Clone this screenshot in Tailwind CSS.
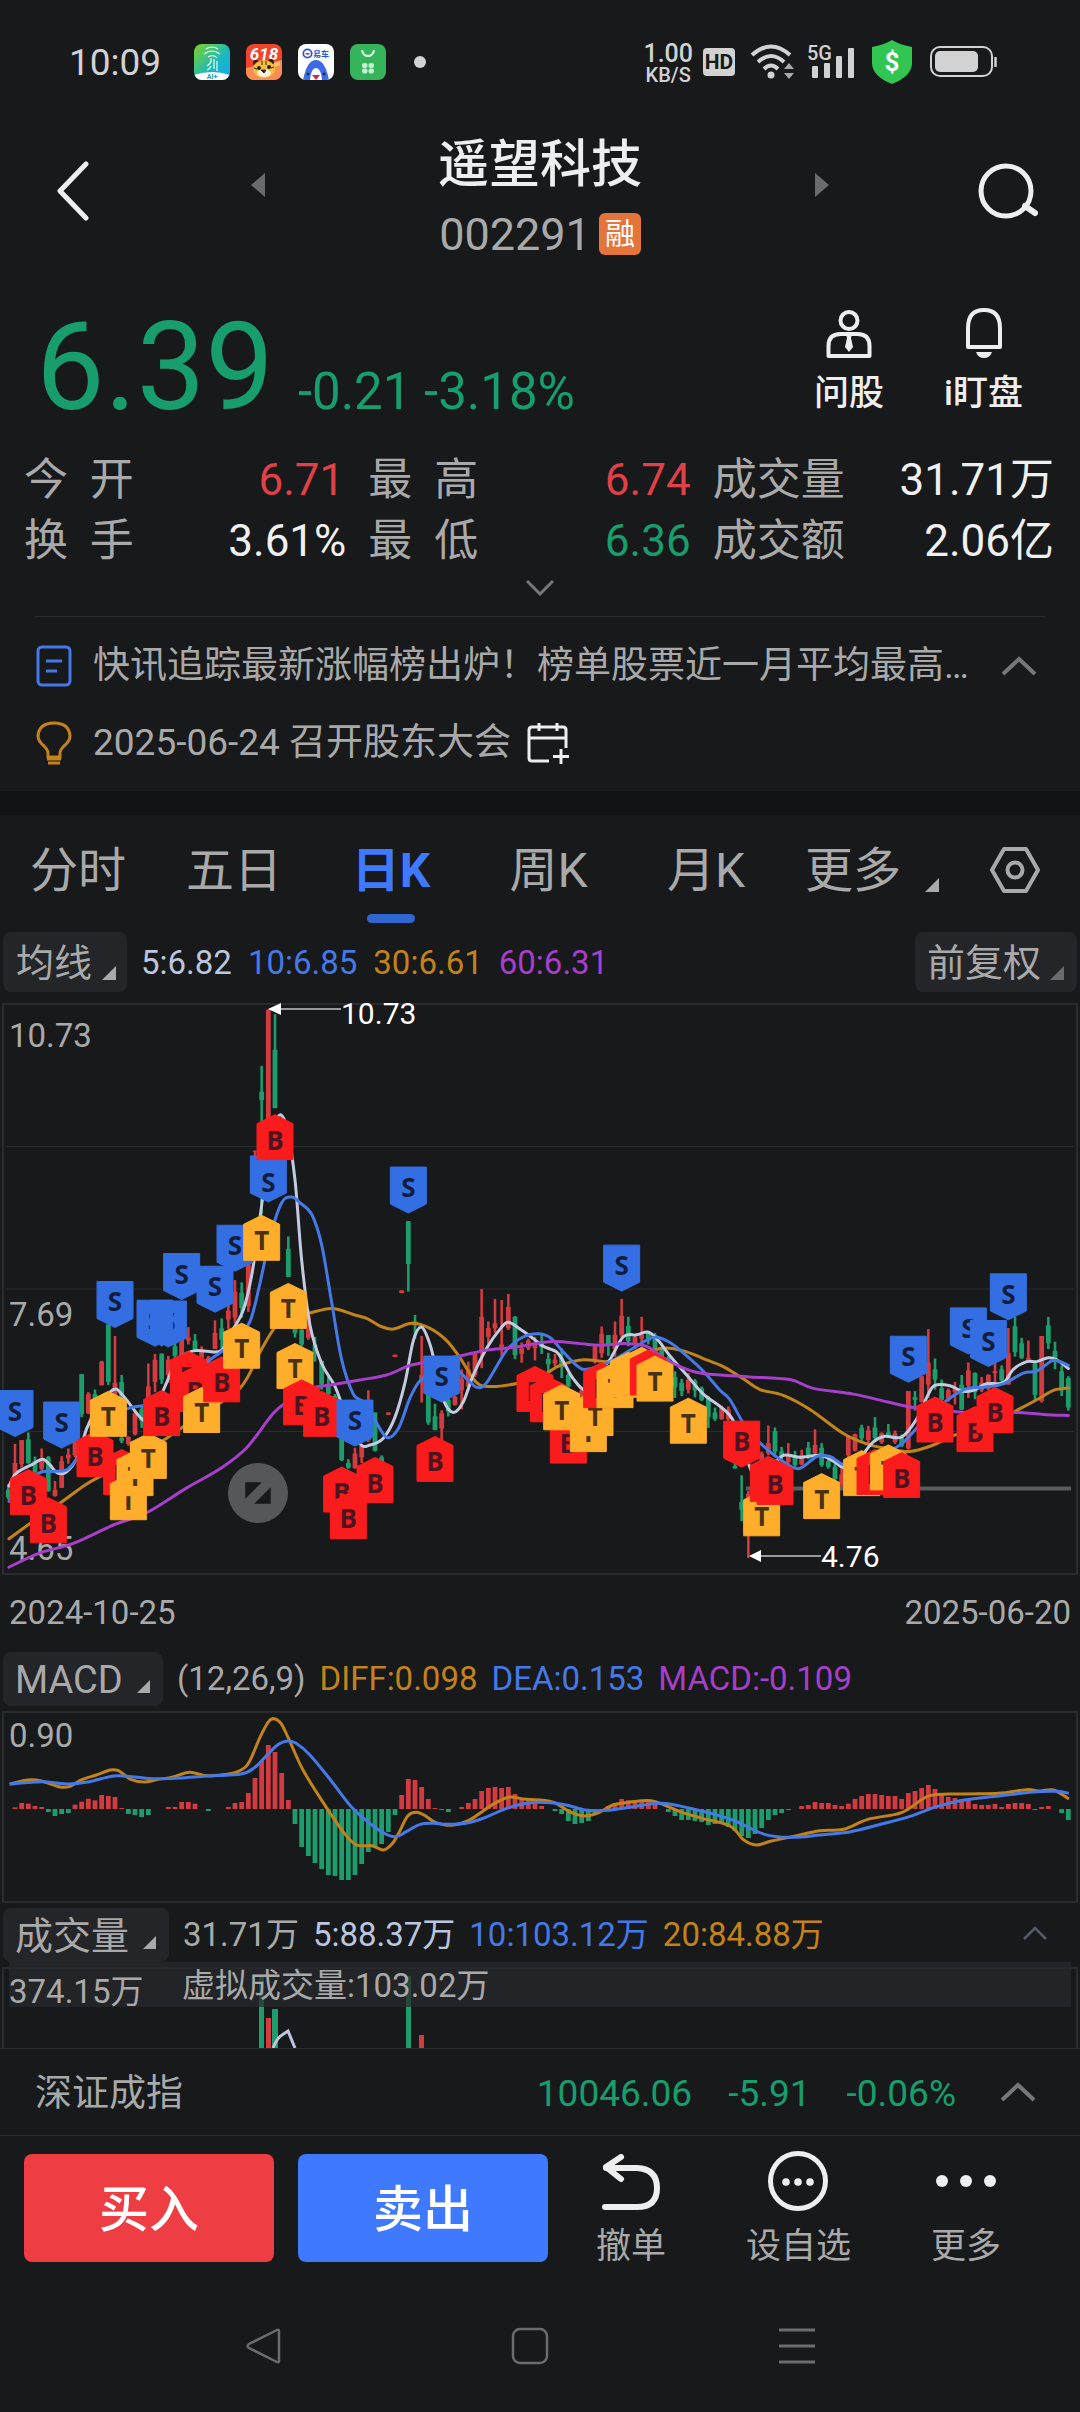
<!DOCTYPE html>
<html lang="zh-CN">
<head>
<meta charset="utf-8">
<meta name="viewport" content="width=device-width, initial-scale=1">
<title>遥望科技 002291</title>
<script src="https://cdn.jsdelivr.net/npm/@tailwindcss/browser@4"></script>
</head>
<body class="bg-[#17191b] text-[#a9a9a9] font-[Roboto,'Noto_Sans_CJK_SC',sans-serif]">
<div class="flex min-h-screen w-full flex-col overflow-hidden">

  <!-- status bar -->
  <div class="flex h-[124px] items-center pl-[69px] pr-[82px] text-[#d2d2d2]">
    <span class="w-[125px] text-[37px] leading-none">10:09</span>
    <div class="flex items-center gap-4">
      <svg class="size-9" viewBox="0 0 36 36"><defs><linearGradient id="ga" x1="0" y1="0" x2="1" y2="1"><stop offset="0" stop-color="#7dd321"/><stop offset=".6" stop-color="#18b7c4"/><stop offset="1" stop-color="#18a8ee"/></linearGradient><clipPath id="r"><rect width="36" height="36" rx="8"/></clipPath></defs><g clip-path="url(#r)"><rect width="36" height="36" fill="url(#ga)"/><path d="M12 5q6-4 12 0M10 10q8-6 16 0M14 13q6-3 9 1M13 22q5-3 4-8M20 15v10M23 17v10M13 26q3-1 4-4" fill="none" stroke="#e8fff4" stroke-width="1.2"/><path d="M0 31q18-6 36 0v6H0z" fill="#fff"/><text x="18" y="35" text-anchor="middle" font-size="7" font-weight="700" fill="#18a0b8">AI+</text></g></svg>
      <svg class="size-9" viewBox="0 0 36 36"><g clip-path="url(#r)"><rect width="36" height="36" fill="#f0442c"/><path d="M0 24l36-8v20H0z" fill="#f98d55"/><text x="18" y="16" text-anchor="middle" font-size="17" font-style="italic" font-weight="700" fill="#fff">618</text><circle cx="10" cy="19" r="3" fill="#2d2115"/><circle cx="25" cy="18" r="3" fill="#2d2115"/><ellipse cx="18" cy="25" rx="11" ry="9" fill="#f9bd3d"/><ellipse cx="18" cy="29" rx="7" ry="4" fill="#fff3da"/><circle cx="13" cy="24" r="2" fill="#222"/><circle cx="23" cy="23" r="2" fill="#222"/><path d="M15 26h5l-2 3zM16 17v4M20 17v4M8 24l3 1M28 23l-3 1" stroke="#222" fill="#222"/><path d="M28 19l6-2v4l-5 2z" fill="#fbc46a"/></g></svg>
      <svg class="size-9" viewBox="0 0 36 36"><g clip-path="url(#r)"><rect width="36" height="36" fill="#fff"/><circle cx="9.500" cy="9.500" r="4.200" fill="none" stroke="#2f56d8" stroke-width="1.800"/><path d="M7 9h5q-2 4-5 0" fill="#d63a4c"/><text x="15" y="13" font-size="8" font-weight="700" fill="#2f56d8">易车</text><path d="M5 36q4-20 13-20t13 20z" fill="#3d6be6"/><path d="M12 36q1-12 6-12t6 12z" fill="#fff"/><circle cx="10" cy="30" r="1.300" fill="#123"/><circle cx="26" cy="30" r="1.300" fill="#123"/><path d="M14 31h8l-4 5z" fill="#c9304f"/></g></svg>
      <svg class="size-9" viewBox="0 0 36 36"><rect width="36" height="36" rx="8" fill="#35b45b"/><path d="M12 6q1 6 6 6t6-6" fill="none" stroke="#d8f7e0" stroke-width="2"/><g fill="#c6f0d2"><rect x="12" y="19" width="5.500" height="5" rx="2"/><rect x="18.500" y="19" width="5.500" height="5" rx="2"/><rect x="12" y="24.500" width="5.500" height="5" rx="2"/><rect x="18.500" y="24.500" width="5.500" height="5" rx="2"/></g></svg>
    </div>
    <span class="ml-7 size-3 rounded-full bg-[#d2d2d2]"></span>
    <div class="ml-auto flex items-center">
      <div class="flex flex-col items-center pt-1 font-medium"><span class="text-[25px] leading-[22px]">1.00</span><span class="text-[20px] leading-[20px]">KB/S</span></div>
      <span class="ml-[10px] flex h-7 w-8 items-center justify-center rounded-sm bg-[#d2d2d2] text-[21px] font-bold leading-none text-[#17191b]">HD</span>
      <svg class="ml-[15px] h-9 w-[46px]" viewBox="0 0 46 36"><g fill="none" stroke="#d2d2d2" stroke-width="4"><path d="M2 11Q21-6 40 11"/><path d="M8 18Q21 6 34 18"/><path d="M14 25Q21 18 28 25"/></g><circle cx="21" cy="31" r="3.500" fill="#d2d2d2"/><path d="M39 19l5 6H34zM39 35l5-6H34z" fill="#aaa"/></svg>
      <svg class="ml-[12px] h-9 w-12" viewBox="0 0 48 36"><text x="-1" y="16" font-size="20" font-weight="500" fill="#d2d2d2">5G</text><g fill="#d2d2d2"><rect x="4" y="22" width="6" height="12" rx="1"/><rect x="16" y="19" width="6" height="15" rx="1"/><rect x="28" y="12" width="6" height="22" rx="1"/><rect x="40" y="4" width="6" height="30" rx="1"/></g></svg>
      <svg class="ml-4 h-11 w-10" viewBox="0 0 40 44"><path d="M20 0q8 5 20 7v16q0 13-20 21Q0 36 0 23V7q12-2 20-7z" fill="#31c552"/><text x="20" y="31" text-anchor="middle" font-size="26" font-weight="700" fill="#fff">$</text></svg>
      <svg class="ml-[18px] h-8 w-[68px]" viewBox="0 0 68 32"><rect x="1" y="1" width="61" height="29" rx="9" fill="none" stroke="#d2d2d2" stroke-width="2"/><rect x="5" y="5" width="43" height="21" rx="5" fill="#d2d2d2"/><path d="M65.500 11v10" stroke="#d2d2d2" stroke-width="2.500"/></svg>
    </div>
  </div>

  <!-- title bar -->
  <header class="flex h-[138px] items-center justify-between pl-[56px] pr-[42px] text-[#eee]">
    <button aria-label="返回" class="pb-1"><svg class="h-[60px] w-[34px]" viewBox="0 0 34 60"><path d="M30 3L4 30l26 27" fill="none" stroke="#eee" stroke-width="5" stroke-linecap="round" stroke-linejoin="round"/></svg></button>
    <button aria-label="上一只" class="ml-[161px] pb-4"><svg class="h-6 w-[14px]" viewBox="0 0 14 24"><path d="M14 0v24L0 12z" fill="#6b6b6b"/></svg></button>
    <div class="flex flex-1 flex-col items-center pt-1">
      <h1 class="text-[51px] font-medium leading-[78px]">遥望科技</h1>
      <div class="flex h-[60px] items-center gap-2 text-[45px] leading-none text-[#a9a9a9]">002291<span class="flex size-[42px] items-center justify-center rounded-md bg-[#e5743b] text-[30px] leading-none text-white">融</span></div>
    </div>
    <button aria-label="下一只" class="mr-[149px] pb-4"><svg class="h-6 w-[14px]" viewBox="0 0 14 24"><path d="M0 0v24l14-12z" fill="#6b6b6b"/></svg></button>
    <button aria-label="搜索" class="pb-1"><svg class="size-[60px]" viewBox="0 0 60 60"><circle cx="28" cy="30" r="25" fill="none" stroke="#eee" stroke-width="5"/><path d="M47 45l10 7" stroke="#eee" stroke-width="6" stroke-linecap="round"/></svg></button>
  </header>

  <!-- price -->
  <section class="flex h-[187px] items-start pl-[36px] pr-[57px] pt-[45px]">
    <div class="flex items-baseline text-[#179e6c]"><span class="text-[122px] leading-none">6.39</span><span class="ml-6 text-[51px] leading-none">-0.21 -3.18%</span></div>
    <div class="ml-auto flex gap-[60px] pt-px text-[35px] font-medium leading-[52px] text-[#eee]">
      <button class="flex flex-col items-center"><svg class="mb-[10px] h-[50px] w-[46px]" viewBox="0 0 46 50"><g fill="none" stroke="#eee" stroke-width="4"><circle cx="23" cy="12.500" r="8.500"/><path d="M2.500 48V38q0-12 12-12h17q12 0 12 12v10z" stroke-linejoin="round"/></g><path d="M20 26h6l-1 4 2 9-4 5-4-5 2-9z" fill="#eee"/></svg>问股</button>
      <button class="flex flex-col items-center"><svg class="mb-[10px] h-[50px] w-9" viewBox="0 0 36 50"><path d="M2 39V20Q2 2 18 2t16 18v19z" fill="none" stroke="#eee" stroke-width="4" stroke-linejoin="round"/><path d="M10 44h16q-2 6-8 6t-8-6z" fill="#eee"/></svg>i盯盘</button>
    </div>
  </section>

  <dl class="grid grid-cols-[322fr_322fr_341fr] gap-x-[22px] pl-6 pr-[26px] pt-px text-[44px] leading-[61px]">
    <div class="flex justify-between"><dt>今&nbsp;&nbsp;开</dt><dd class="pr-[2px] text-[#e04146]">6.71</dd></div>
    <div class="flex justify-between"><dt>最&nbsp;&nbsp;高</dt><dd class="text-[#e04146]">6.74</dd></div>
    <div class="flex justify-between"><dt>成交量</dt><dd class="text-[#f0f0f0]">31.71万</dd></div>
    <div class="flex justify-between"><dt>换&nbsp;&nbsp;手</dt><dd class="text-[#f0f0f0]">3.61%</dd></div>
    <div class="flex justify-between"><dt>最&nbsp;&nbsp;低</dt><dd class="text-[#179e6c]">6.36</dd></div>
    <div class="flex justify-between"><dt>成交额</dt><dd class="text-[#f0f0f0]">2.06亿</dd></div>
  </dl>
  <button aria-label="展开" class="mb-3 flex h-8 items-center justify-center"><svg class="h-4 w-7" viewBox="0 0 28 16"><path d="M1 1l13 13L27 1" fill="none" stroke="#777" stroke-width="3"/></svg></button>

  <!-- news -->
  <section class="mx-[35px] border-t border-[#292b2d] py-[10px] text-[37px]">
    <a href="#news" class="flex h-[77px] items-center"><svg class="ml-px h-[42px] w-9 shrink-0" viewBox="0 0 36 42"><rect x="2" y="2" width="32" height="38" rx="4" fill="none" stroke="#4679e8" stroke-width="3"/><path d="M10 16h16M10 26h11" stroke="#4679e8" stroke-width="3"/></svg><span class="ml-[21px] w-0 flex-1 truncate leading-[60px]">快讯追踪最新涨幅榜出炉！榜单股票近一月平均最高涨幅超预期</span><svg class="ml-5 mr-2 h-5 w-9 shrink-0" viewBox="0 0 36 20"><path d="M2 18L18 3l16 15" fill="none" stroke="#777" stroke-width="4"/></svg></a>
    <a href="#event" class="flex h-[77px] items-center"><svg class="ml-px h-[44px] w-9 shrink-0" viewBox="0 0 36 44"><path d="M12 36v-4q0-3-4-7Q2 20 2 15 3 2 18 2t16 13q0 5-6 10-4 4-4 7v4zM11 38h14" fill="none" stroke="#c2831a" stroke-width="3"/><path d="M12 42h12" stroke="#c2831a" stroke-width="3"/></svg><span class="ml-[21px] leading-[60px]">2025-06-24 召开股东大会</span><svg class="ml-4 size-[42px] shrink-0" viewBox="0 0 42 42"><path d="M22 39H5q-3 0-3-3V8q0-3 3-3h31q3 0 3 3v18M2 16h37M12 1v8M30 1v8M34 27v15M26 34.500h16" fill="none" stroke="#eee" stroke-width="3"/></svg></a>
  </section>
  <div class="h-6 bg-[#111314]"></div>

  <!-- period tabs -->
  <nav class="grid h-[110px] grid-cols-[156fr_156fr_158fr_157fr_158fr_175fr_120fr] items-center pt-[2px] text-[48px] leading-[70px]">
    <button>分时</button><button>五日</button>
    <button class="relative font-bold text-[#3f79ff]">日K<span class="absolute -bottom-[17px] left-1/2 h-[9px] w-12 -translate-x-1/2 rounded-full bg-[#2f66d0]"></span></button>
    <button>周K</button><button>月K</button>
    <button class="flex items-center pl-[20px]">更多<svg class="ml-6 mt-7 size-[14px]" viewBox="0 0 14 14"><path d="M14 0v14H0z" fill="#a9a9a9"/></svg></button>
    <button aria-label="设置" class="flex justify-center pb-[2px] pr-[11px]"><svg class="h-[48px] w-[50px]" viewBox="0 0 50 48"><g fill="none" stroke="#a9a9a9" stroke-width="4" stroke-linejoin="round"><path d="M14 3h22l12 21-12 21H14L2 24z"/><circle cx="25" cy="24" r="7.500"/></g></svg></button>
  </nav>

  <!-- moving averages -->
  <div class="mb-[11px] mt-[7px] flex items-center gap-[14px] px-[3px] text-[33px] leading-[54px]">
    <button class="flex h-[60px] w-[124px] items-center rounded-lg bg-[#242529] pl-[13px] pt-[2px] text-[38px]">均线<svg class="ml-[10px] mt-5 size-[14px]" viewBox="0 0 14 14"><path d="M14 0v14H0z" fill="#a9a9a9"/></svg></button>
    <span class="pr-[2px] pt-[2px] text-[#bcc6de]">5:6.82</span><span class="pr-[2px] pt-[2px] text-[#4679e8]">10:6.85</span><span class="pr-[2px] pt-[2px] text-[#c2831a]">30:6.61</span><span class="pt-[2px] text-[#a63fc9]">60:6.31</span>
    <button class="ml-auto flex h-[60px] w-[162px] items-center rounded-lg bg-[#242529] pl-[12px] pt-[2px] text-[38px]">前复权<svg class="ml-[9px] mt-5 size-[14px]" viewBox="0 0 14 14"><path d="M14 0v14H0z" fill="#6b6b6b"/></svg></button>
  </div>

  <svg id="kline" class="block h-auto w-full" viewBox="0 0 1080 572" role="img" aria-label="日K线图">
    <g stroke="#292b2d"><rect x="3" y="1" width="1074" height="570" fill="none" stroke-width="2"/><path d="M6 143.500h1068M6 286h1068M6 428.500h1068"/></g>
    <g font-size="33" fill="#a9a9a9"><text x="9" y="44">10.73</text><text x="9" y="323">7.69</text><text x="9" y="557">4.65</text></g>
    <path d="M746 485.500h325" stroke="#5a5b5d" stroke-width="4"/>
    <g id="candles"></g>
    <g id="averages" fill="none" stroke-width="3" stroke-linecap="round"></g>
    <g id="tags" font-family="'Open Sans'" font-weight="700" font-size="26" text-anchor="middle"></g>
    <path d="M280 6h61M761 553h60" stroke="#999" stroke-width="2"/><path d="M268 6l13-6v12zM749 553l12-6v12z" fill="#fff"/>
    <g font-size="30" fill="#fff"><text x="341" y="21">10.73</text><text x="821" y="564">4.76</text></g>
    <circle cx="258" cy="490" r="30" fill="#565758"/><path d="M246 480h14l-14 14zM270 500h-14l14-14z" fill="#17191b" stroke="#17191b" stroke-width="1.500"/>
  </svg>
  <div class="flex h-[76px] items-center justify-between px-[9px] text-[33px]"><time>2024-10-25</time><time>2025-06-20</time></div>

  <!-- MACD -->
  <div class="mb-[5px] mt-px flex items-center gap-[14px] px-[3px] text-[33px] leading-[54px]">
    <button class="flex h-[54px] w-[160px] items-center rounded-lg bg-[#242529] pl-[12px] pt-[2px] text-[38px]">MACD<svg class="ml-[14px] mt-3 size-[13px]" viewBox="0 0 14 14"><path d="M14 0v14H0z" fill="#a9a9a9"/></svg></button>
    <span>(12,26,9)</span><span class="text-[#c2831a]">DIFF:0.098</span><span class="text-[#4679e8]">DEA:0.153</span><span class="text-[#a63fc9]">MACD:-0.109</span>
  </div>
  <svg class="block h-auto w-full" viewBox="0 0 1080 192" role="img" aria-label="MACD 指标图">
    <rect x="3" y="1" width="1074" height="190" fill="none" stroke="#292b2d" stroke-width="2"/>
    <text x="9" y="36" font-size="33" fill="#a9a9a9">0.90</text>
    <g id="macd"></g>
    <g id="macdlines" fill="none" stroke-width="3"></g>
  </svg>

  <!-- volume -->
  <div class="mt-[5px] flex items-center gap-[14px] pl-[3px] pr-8 text-[33px] leading-[54px]">
    <button class="flex h-[54px] w-[166px] items-center rounded-lg bg-[#242529] pl-[12px] pt-[2px] text-[38px]">成交量<svg class="ml-[14px] mt-3 size-[13px]" viewBox="0 0 14 14"><path d="M14 0v14H0z" fill="#a9a9a9"/></svg></button>
    <span>31.71万</span><span class="text-[#bcc6de]">5:88.37万</span><span class="text-[#4679e8]">10:103.12万</span><span class="text-[#c2831a]">20:84.88万</span>
    <button aria-label="收起" class="ml-auto pb-1"><svg class="h-4 w-[26px]" viewBox="0 0 26 16"><path d="M2 14L13 3l11 11" fill="none" stroke="#555c68" stroke-width="2.500"/></svg></button>
  </div>
  <svg class="block h-auto w-full" viewBox="0 0 1080 86" role="img" aria-label="成交量图">
    <path d="M3 86V6h1074v80" fill="none" stroke="#292b2d" stroke-width="2"/>
    <g fill="#1e9c6c"><rect x="259" y="14" width="5" height="72"/><rect x="272" y="47" width="6" height="39"/><rect x="406" y="14" width="5" height="72"/></g>
    <g fill="#d23b3f"><rect x="266" y="56" width="5" height="30"/><rect x="419" y="73" width="5" height="13"/></g>
    <path d="M273 86q4-10 9-13l6-4 7 17" fill="none" stroke="#bcc6de" stroke-width="3"/>
    <rect x="9" width="1062" height="45" fill="#27282c" fill-opacity=".72"/>
    <g fill="#a9a9a9" font-size="33"><text x="9" y="41">374.15万</text><text x="182" y="35">虚拟成交量:103.02万</text></g>
  </svg>

  <!-- index -->
  <a href="#index" class="flex h-[88px] items-center border-y border-[#292b2d] pl-[35px] pr-11 pt-1 text-[37px] leading-[60px]">
    <span>深证成指</span>
    <span class="ml-auto flex gap-9 text-[#179e6c]"><span>10046.06</span><span>-5.91</span><span>-0.06%</span></span>
    <svg class="mb-1 ml-11 h-5 w-9" viewBox="0 0 36 20"><path d="M2 18L18 3l16 15" fill="none" stroke="#777" stroke-width="4"/></svg>
  </a>

  <!-- trade bar -->
  <div class="flex pl-6 pt-[18px] text-[35px] leading-[50px]">
    <button class="h-[108px] w-[250px] rounded-lg bg-[#ee3d43] pt-1 text-[50px] font-medium text-white">买入</button>
    <button class="ml-6 h-[108px] w-[250px] rounded-lg bg-[#3e79ff] pt-1 text-[50px] font-medium text-white">卖出</button>
    <div class="flex flex-1 justify-between pl-12 pr-[79px]">
      <button class="flex flex-col items-center"><svg class="mb-2 h-[60px] w-[60px]" viewBox="0 0 60 60"><path d="M20 3L5 13l15 12M5 14h31q20 1 20 20T36 53H4" fill="none" stroke="#eee" stroke-width="6" stroke-linecap="round" stroke-linejoin="round"/></svg>撤单</button>
      <button class="flex flex-col items-center"><svg class="-mt-[3px] mb-[11px] h-[60px] w-[60px]" viewBox="0 0 60 60"><circle cx="30" cy="30" r="27.500" fill="none" stroke="#eee" stroke-width="5"/><g fill="#eee"><circle cx="18" cy="31" r="3.800"/><circle cx="30" cy="31" r="3.800"/><circle cx="42" cy="31" r="3.800"/></g></svg>设自选</button>
      <button class="flex flex-col items-center"><svg class="-mt-[3px] mb-[11px] h-[60px] w-[60px]" viewBox="0 0 60 60"><g fill="#eee"><circle cx="6" cy="30" r="6"/><circle cx="30" cy="30" r="6"/><circle cx="54" cy="30" r="6"/></g></svg>更多</button>
    </div>
  </div>

  <!-- system navigation -->
  <nav class="flex items-center justify-between pb-12 pl-[244px] pr-[264px] pt-[55px]">
    <button aria-label="后退"><svg class="size-[38px]" viewBox="0 0 38 38"><path d="M35 4v30q0 2-2 1L5 21q-3-2 0-4L33 3q2-1 2 1z" fill="none" stroke="#6b6c6e" stroke-width="2.500"/></svg></button>
    <button aria-label="主页"><svg class="size-[38px]" viewBox="0 0 38 38"><rect x="2" y="2" width="34" height="34" rx="7" fill="none" stroke="#6b6c6e" stroke-width="2.500"/></svg></button>
    <button aria-label="任务"><svg class="size-[38px]" viewBox="0 0 38 38"><path d="M1 3h36M1 19h36M1 35h36" stroke="#6b6c6e" stroke-width="3"/></svg></button>
  </nav>
</div>

<script>
// Chart data is stored on a 3240-wide grid: 20 units per trading day.
const X = p => p / 3, Y = q => q / 2.6133 - 3;
const RED = '#d23b3f', GREEN = '#1e9c6c';
const put = (id, html) => { document.getElementById(id).innerHTML = html; };

// position, direction, high, low, body top, body bottom
const candles = `25g1265,1305,1280,1300 45r1160,1300,1210,1300 65r1150,1222,1150,1213 85g1130,1212,1148,1210 105g1193,1240,1205,1235 125r1172,1230,1198,1225 145g1192,1285,1195,1283 165r1257,1298,1280,1296 185r1192,1275,1205,1275 205r1172,1212,1188,1198 225r1150,1195,1155,1190 245g978,1090,978,1082 265r1025,1082,1030,1080 285g1018,1050,1030,1048 305r943,1007,945,1007 325g848,1006,848,998 345r878,1050,1000,1050 365g980,1060,998,1058 365g1140,1158,1145,1152 385r1140,1165,1142,1160 405r1075,1138,1080,1135 425g1062,1118,1070,1100 445r950,1060,1010,1050 465r925,1025,940,998 485g924,1003,924,992 505r930,1000,940,980 525g890,950,905,930 545r880,940,885,935 565r855,900,882,890 585g873,915,890,912 605r905,940,915,935 625r930,960,935,950 645r837,912,870,912 665g832,910,858,888 685r795,860,812,835 705r732,845,762,830 725g738,830,765,805 745r690,815,690,800 765r393,430,395,397 785g172,560,240,262 805r25,430,25,430 825g37,283,130,282 865g618,724,650,724 885g850,882,860,870 905g860,905,862,900 925r810,888,825,883 945g880,945,900,925 965g943,1018,943,1005 985g985,1033,1003,1030 1005g1030,1060,1035,1050 1025g1140,1205,1145,1202 1045g1200,1225,1210,1222 1065r1170,1225,1185,1223 1085r1160,1210,1165,1195 1105r1020,1155,1120,1150 1125g1078,1180,1078,1178 1145g1190,1215,1195,1210 1165r1078,1084,1078,1084 1185r927,933,927,933 1205r759,766,759,766 1225g578,762,578,690 1245g823,885,840,850 1265r878,1052,980,995 1285g1030,1110,1030,1104 1305g1055,1124,1088,1124 1325r1072,1160,1080,1120 1345g1040,1088,1045,1075 1365r1035,1060,1037,1058 1385r965,1070,990,1020 1405r945,1020,965,1010 1425r918,985,922,980 1445r755,962,828,918 1465r840,900,857,880 1485r781,870,845,858 1505r784,930,900,910 1525r768,862,802,858 1545g826,938,828,928 1565r895,948,910,925 1585r885,915,890,910 1605r880,942,900,910 1625g875,925,893,908 1645g922,970,938,952 1665r925,958,940,950 1685g910,988,935,960 1705g975,1015,980,1010 1745r1015,1038,1020,1035 1785r900,950,905,940 1805r853,935,872,923 1825g875,930,876,900 1845r840,932,875,912 1865r781,882,825,875 1885g828,905,852,892 1905r875,912,880,900 1925r828,895,875,885 1945g865,900,868,890 1965g870,930,875,920 1985g905,940,910,935 2005g930,955,935,950 2025g970,1040,985,1012 2045g990,1035,1000,1022 2065r975,1028,992,1018 2085g990,1038,995,1020 2105g1010,1048,1015,1045 2125g1035,1118,1040,1090 2145g1065,1100,1078,1095 2165r1060,1097,1065,1095 2185r1062,1100,1070,1095 2205g1195,1225,1218,1224 2225g1242,1362,1312,1332 2245r1283,1458,1290,1300 2285r1180,1215,1185,1210 2305r1112,1190,1158,1185 2325g1117,1195,1127,1180 2345g1168,1200,1180,1195 2365r1158,1213,1190,1208 2385g1178,1220,1190,1215 2405r1175,1216,1190,1213 2425g1155,1200,1170,1195 2445r1122,1190,1163,1185 2465g1158,1220,1170,1215 2485g1195,1225,1205,1220 2505g1210,1258,1220,1252 2525r1220,1272,1240,1265 2545r1140,1195,1142,1190 2565r1133,1180,1135,1178 2585g1110,1155,1118,1145 2605r1113,1158,1125,1150 2625g1090,1150,1117,1145 2645r1130,1160,1132,1155 2665g1108,1145,1130,1142 2685r1125,1160,1132,1155 2705g1135,1168,1140,1165 2725r1022,1175,1022,1172 2745g1022,1073,1038,1045 2765r983,1052,983,1050 2785r860,1040,948,1005 2805g937,1018,965,992 2825g992,1055,1015,1045 2845r1015,1050,1020,1045 2865r998,1057,1015,1025 2885g980,1072,1005,1070 2905r947,1040,968,1008 2925g973,1043,975,1025 2945r985,1025,1000,1020 2965r978,1020,980,1015 2985r945,1010,970,975 3005g955,1005,965,995 3025r857,1005,923,1005 3045g828,932,853,920 3065g883,938,897,935 3085r890,942,935,940 3105g945,1048,950,1032 3125r878,1052,878,1048 3145g828,912,850,897 3165g893,965,917,945 3185g955,1035,970,1020 3205g983,1073,988,1065`;
put('candles', candles.split(' ').map(s => {
  const [, p, d, v] = s.match(/^(\d+)([rg])(.+)$/), [h, l, t, b] = v.split(',').map(Number);
  return `<g fill="${d === 'r' ? RED : GREEN}"><rect x="${X(p) - 1.3}" y="${Y(h)}" width="2.6" height="${(l - h) / 2.6133}"/><rect x="${X(p) - 2.4}" y="${Y(t)}" width="4.8" height="${(b - t) / 2.6133}"/></g>`;
}).join(''));

function curve(points, fx, fy) {
  const a = points.split(' ').map(s => s.split(',').map(Number)).map(([x, y]) => [fx(x), fy(y)]);
  let d = `M${a[0]}`;
  for (let i = 0; i < a.length - 1; i++) {
    const p = a[i - 1] || a[i], q = a[i], r = a[i + 1], s = a[i + 2] || r;
    d += `C${q[0] + (r[0] - p[0]) / 6},${q[1] + (r[1] - p[1]) / 6} ${r[0] - (s[0] - q[0]) / 6},${r[1] - (s[1] - q[1]) / 6} ${r}`;
  }
  return d;
}
const averages = {
  '#c2831a': '27,1408 90,1368 180,1315 260,1265 330,1232 420,1190 500,1145 600,1085 700,1030 740,990 780,920 830,850 880,825 920,820 995,806 1060,822 1100,832 1140,852 1180,860 1235,845 1290,858 1340,890 1380,935 1430,1000 1475,1010 1550,1002 1620,985 1680,955 1750,940 1820,945 1900,935 1985,910 2050,917 2110,937 2170,958 2230,990 2280,1018 2350,1033 2430,1070 2530,1133 2600,1160 2660,1172 2730,1180 2800,1163 2860,1138 2930,1125 2990,1100 3060,1068 3120,1040 3160,1020 3205,1014',
  '#c3cbe0': '27,1270 45,1240 70,1225 100,1212 128,1200 150,1215 170,1235 200,1233 235,1190 260,1120 290,1070 340,1018 370,1035 430,1098 460,1075 500,1000 530,940 580,917 620,918 665,915 700,860 730,810 755,720 775,600 790,500 800,400 820,330 842,300 862,340 885,470 905,680 930,850 965,950 1005,1010 1040,1090 1080,1160 1110,1163 1150,1145 1185,1090 1215,1000 1240,890 1265,855 1290,900 1310,970 1330,1045 1360,1078 1390,1050 1420,980 1460,910 1500,860 1525,842 1560,860 1600,885 1630,905 1670,920 1690,945 1720,990 1760,1020 1800,970 1830,940 1870,880 1910,875 1945,868 1975,890 2010,930 2060,980 2110,1030 2160,1062 2200,1100 2240,1200 2270,1250 2310,1225 2350,1190 2400,1195 2460,1190 2500,1205 2535,1222 2580,1195 2620,1155 2655,1140 2705,1142 2750,1095 2785,1030 2805,1007 2850,1008 2885,1022 2920,1020 2960,1003 3010,1000 3040,965 3080,945 3110,945 3145,935 3170,940 3205,963',
  '#4679e8': '27,1310 60,1270 120,1235 160,1232 200,1228 235,1195 280,1140 330,1090 385,1067 430,1060 480,1060 530,1030 580,975 630,940 670,915 710,880 750,840 780,740 810,620 845,530 875,515 900,530 935,560 965,640 995,790 1025,940 1060,1030 1090,1050 1120,1090 1160,1143 1195,1120 1230,1040 1260,995 1300,975 1370,970 1400,990 1430,1012 1460,1000 1520,915 1570,880 1615,872 1650,882 1690,920 1730,955 1760,965 1830,945 1900,910 1960,882 2010,895 2060,930 2110,970 2160,1020 2190,1045 2240,1120 2290,1165 2340,1200 2395,1225 2450,1193 2490,1193 2535,1215 2600,1200 2660,1180 2705,1160 2760,1110 2820,1060 2895,1017 2950,1012 3010,1003 3070,975 3110,970 3155,943 3180,945 3205,955',
  '#a63fc9': '27,1482 120,1445 220,1420 340,1372 440,1340 560,1275 660,1225 740,1170 820,1080 870,1045 930,1015 1000,1005 1080,993 1160,980 1230,955 1300,943 1380,930 1460,915 1540,908 1650,893 1740,898 1800,902 1880,898 1940,905 1990,935 2040,958 2100,975 2160,980 2250,985 2370,992 2440,1015 2560,1030 2660,1050 2740,1065 2850,1075 2950,1080 3050,1078 3130,1083 3205,1086'
};
put('averages', Object.entries(averages).map(([c, p]) => `<path d="${curve(p, X, Y)}" stroke="${c}"/>`).join(''));

// trade tags: letter, position, top edge; lower-case b is a buy tag that points down
const tags = 'S45,1018 B85,1225 B145,1298 S185,1048 B285,1125 T325,1020 S345,733 B365,1172 T385,1238 T405,1175 T445,1130 S465,782 S505,784 S485,782 B485,1018 B565,915 B585,955 T605,1010 S545,660 S705,586 S645,693 B665,930 T725,842 S805,405 T785,560 B825,297 T865,738 T885,895 B905,990 B965,1020 B1025,1218 B1045,1287 S1065,1043 B1125,1193 S1225,434 B1305,1138 S1325,928 B1605,955 B1645,982 B1705,1090 T1685,1003 T1765,1060 T1785,1018 B1805,945 T1845,945 T1885,918 T1925,905 S1865,638 B1945,912 T1965,928 T2065,1038 b2225,1098 T2285,1280 B2305,1190 B2325,1198 T2465,1235 T2585,1175 B2625,1172 T2665,1160 B2705,1180 S2725,876 B2805,1035 S2905,802 B2925,1060 S2965,835 B2985,1010 S3025,713';
const hidden = new Set(['S485', 'T1925', 'T1885', 'B1945', 'B2305']);
put('tags', tags.split(' ').map(s => {
  const k = s[0], [p, t] = s.slice(1).split(',').map(Number), x = X(p), y = Y(t);
  const [fill, ink] = { S: ['#336fe3', '#101d3d'], B: ['#fa1c1c', '#4d1420'], b: ['#fa1c1c', '#4d1420'], T: ['#ffae2b', '#49320f'] }[k];
  const down = k === 'S' || k === 'b', w = k === 'S' && p === 485 ? 11 : 18;
  const d = down ? `M${x - w} ${y + 1}h${2 * w}v37l-${w} 9l-${w}-9z` : `M${x - w} ${y + 10}l${w}-9l${w} 9v36h-${2 * w}z`;
  const label = hidden.has(k + p) ? '' : `<text x="${x}" y="${y + (p === 805 ? 37 : down ? 31 : 36)}" fill="${ink}">${k.toUpperCase()}</text>`;
  return `<path d="${d}" fill="${fill}" stroke="${fill}" stroke-linejoin="round"/>${label}`;
}).join(''));

const macd = [5,18,16,9,6,-9,-21,-15,-12,13,22,31,26,42,39,36,3,-15,-18,-24,-18,0,0,6,6,21,21,16,0,-6,0,0,6,18,21,48,93,144,192,171,108,27,-45,-114,-141,-162,-180,-198,-201,-213,-213,-198,-165,-129,-114,-105,-69,-18,42,90,87,66,30,3,-3,-9,0,6,18,30,54,63,66,63,66,45,30,30,24,9,0,-6,-15,-36,-45,-42,-36,-15,0,9,18,30,26,24,24,24,15,0,-9,-21,-33,-33,-36,-39,-48,-45,-45,-54,-66,-81,-87,-75,-57,-33,-18,-12,-3,0,9,12,21,18,18,12,9,16,30,39,45,45,42,39,39,30,48,54,63,72,60,45,36,33,30,27,15,12,12,15,6,15,18,18,15,-3,6,9,0,-12,-33];
put('macd', macd.map((v, i) => `<rect x="${12.6 + i * 20 / 3}" y="${98 - Math.max(v, 0) / 3}" width="4.8" height="${Math.abs(v) / 3}" fill="${v > 0 ? RED : GREEN}"/>`).join(''));
const diff = '14,612 40,600 60,603 85,620 100,620 120,598 140,585 160,570 172,572 190,598 210,606 230,598 250,592 275,577 300,587 330,583 350,570 362,545 378,470 390,425 398,416 408,430 420,480 440,570 470,670 500,760 518,795 540,797 557,810 570,790 580,755 592,708 605,697 618,708 632,727 655,736 680,722 700,695 720,668 740,651 760,657 785,660 805,668 830,698 850,708 870,697 890,675 915,666 945,662 965,675 990,697 1020,715 1060,738 1080,780 1098,795 1120,783 1150,770 1190,752 1225,748 1260,718 1310,697 1350,647 1400,642 1450,640 1490,629 1510,633 1530,630 1552,657';
const dea = '14,612 60,605 100,612 130,605 170,587 220,596 260,594 300,588 350,582 370,562 390,520 405,492 418,483 430,490 450,525 480,600 510,680 540,735 560,762 575,770 590,755 610,733 630,730 650,733 680,728 705,712 740,682 780,667 820,674 850,690 880,691 920,680 960,670 1000,684 1060,717 1110,763 1150,772 1190,765 1235,755 1280,732 1320,710 1360,680 1400,660 1450,648 1500,636 1535,634 1552,640';
const MX = p => p / 1.452, MY = q => (q - 687) / 3 + 98;
put('macdlines', `<path d="${curve(diff, MX, MY)}" stroke="#c2831a"/><path d="${curve(dea, MX, MY)}" stroke="#4679e8"/>`);
</script>
</body>
</html>
